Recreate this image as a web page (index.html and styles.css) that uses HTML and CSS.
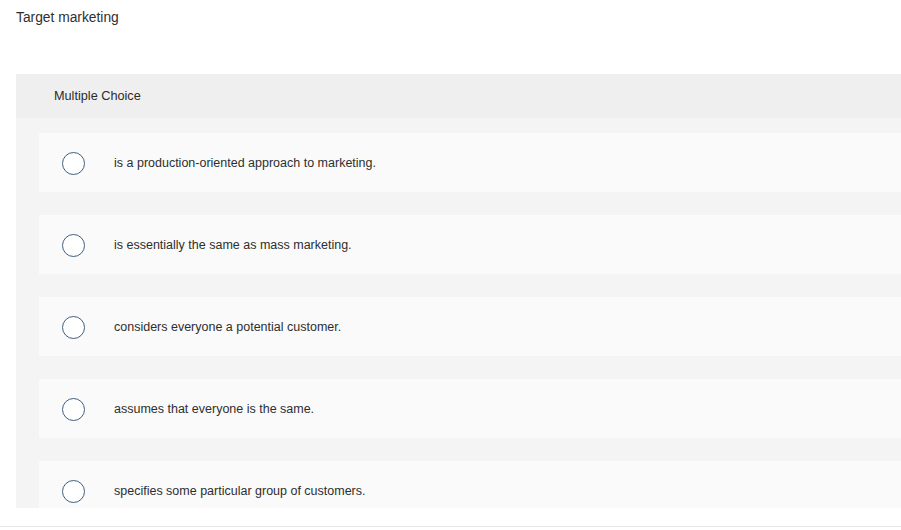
FILE: index.html
```html
<!DOCTYPE html>
<html lang="en">
<head>
<meta charset="utf-8">
<title>Target marketing</title>
<link rel="stylesheet" href="styles.css">
</head>
<body>
<div class="page">
  <div class="question">Target marketing</div>
  <div class="panel">
    <div class="panel-head">Multiple Choice</div>
    <div class="panel-body">
      <div class="option"><span class="radio"></span><span class="label">is a production-oriented approach to marketing.</span></div>
      <div class="option"><span class="radio"></span><span class="label">is essentially the same as mass marketing.</span></div>
      <div class="option"><span class="radio"></span><span class="label">considers everyone a potential customer.</span></div>
      <div class="option"><span class="radio"></span><span class="label">assumes that everyone is the same.</span></div>
      <div class="option"><span class="radio"></span><span class="label">specifies some particular group of customers.</span></div>
    </div>
  </div>
  <div class="rule"></div>
</div>
</body>
</html>
```

FILE: styles.css
```css
html, body {
  margin: 0;
  padding: 0;
  background: #ffffff;
  overflow: hidden;
}
.page {
  width: 901px;
  height: 530px;
  font-family: "Liberation Sans", Arial, sans-serif;
  color: #333333;
  display: flex;
  flex-direction: column;
}
.question {
  font-size: 13.8px;
  line-height: 16px;
  padding: 10px 0 0 16px;
  height: 74px;
  box-sizing: border-box;
  flex: none;
  color: #2f2f2f;
}
.panel {
  margin-left: 16px;
  height: 434px;
  overflow: hidden;
  background: #f4f4f4;
  display: flex;
  flex-direction: column;
  flex: none;
}
.panel-head {
  background: #efefef;
  height: 44px;
  display: flex;
  align-items: center;
  padding-left: 38px;
  font-size: 12.7px;
  color: #2b2b2b;
  flex: none;
}
.panel-body {
  padding: 15px 0 0 23px;
  display: flex;
  flex-direction: column;
  gap: 23px;
}
.option {
  background: #fafafa;
  height: 59px;
  display: flex;
  align-items: center;
  padding-left: 23px;
  flex: none;
}
.radio {
  width: 21px;
  height: 21px;
  border: 1.5px solid #3d5f80;
  border-radius: 50%;
  background: #ffffff;
  flex: none;
  margin-top: 1px;
}
.label {
  margin-left: 29px;
  font-size: 12.5px;
  color: #2e2e2e;
}
.rule {
  margin-top: 18px;
  height: 1px;
  background: #e8e8e8;
  flex: none;
}
```
